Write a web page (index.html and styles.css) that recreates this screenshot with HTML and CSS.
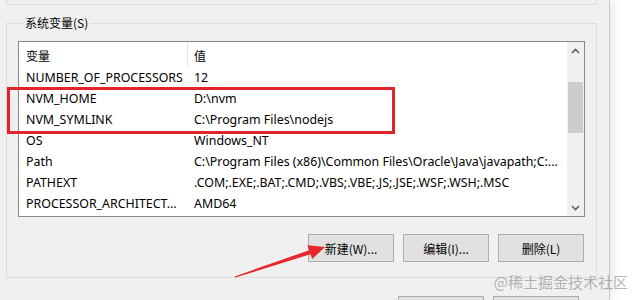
FILE: index.html
```html
<!DOCTYPE html>
<html lang="zh-CN">
<head>
<meta charset="utf-8">
<title>系统变量</title>
<link rel="stylesheet" href="styles.css">
</head>
<body>
<div class="screen">
  <div class="dialog">
    <div class="prev-group"></div>
    <fieldset class="group">
      <legend class="legend">系统变量(S)</legend>
      <div class="listbox">
        <div class="list">
          <div class="row head"><span class="c1 cjk">变量</span><span class="c2 cjk">值</span></div>
          <div class="row"><span class="c1">NUMBER_OF_PROCESSORS</span><span class="c2">12</span></div>
          <div class="row"><span class="c1">NVM_HOME</span><span class="c2">D:\nvm</span></div>
          <div class="row"><span class="c1">NVM_SYMLINK</span><span class="c2">C:\Program Files\nodejs</span></div>
          <div class="row"><span class="c1">OS</span><span class="c2">Windows_NT</span></div>
          <div class="row"><span class="c1">Path</span><span class="c2">C:\Program Files (x86)\Common Files\Oracle\Java\javapath;C:...</span></div>
          <div class="row"><span class="c1">PATHEXT</span><span class="c2">.COM;.EXE;.BAT;.CMD;.VBS;.VBE;.JS;.JSE;.WSF;.WSH;.MSC</span></div>
          <div class="row"><span class="c1">PROCESSOR_ARCHITECT...</span><span class="c2">AMD64</span></div>
        </div>
        <div class="scrollbar">
          <div class="sb-btn"><svg width="9" height="6" viewBox="0 0 9 6"><path d="M1 5 L4.5 1.5 L8 5" fill="none" stroke="#606060" stroke-width="1.6"/></svg></div>
          <div class="sb-track"><div class="sb-thumb"></div></div>
          <div class="sb-btn"><svg width="9" height="6" viewBox="0 0 9 6"><path d="M1 1 L4.5 4.5 L8 1" fill="none" stroke="#606060" stroke-width="1.6"/></svg></div>
        </div>
      </div>
      <div class="buttons">
        <button class="btn">新建(W)...</button>
        <button class="btn">编辑(I)...</button>
        <button class="btn">删除(L)</button>
      </div>
    </fieldset>
    <div class="dlg-buttons">
      <button class="btn" aria-label="确定"></button>
      <button class="btn" aria-label="取消"></button>
    </div>
  </div>
  <div class="highlight"></div>
  <svg class="arrow" width="640" height="300" viewBox="0 0 640 300">
    <polygon points="235.3,277.6 310.4,254.2 312.2,259 325,247 307.4,245.3 309.2,250.2 234.7,276.4" fill="#e8262d"/>
  </svg>
  <div class="watermark">@稀土掘金技术社区</div>
</div>
</body>
</html>
```

FILE: styles.css
```css
* { box-sizing: border-box; }
body {
  margin: 0;
  background: #ffffff;
  font-family: "Noto Sans", "Noto Sans CJK SC", sans-serif;
  font-size: 12px;
  color: #000;
}
.cjk, .legend, .btn, .watermark {
  font-family: "Noto Sans CJK SC", "Noto Sans", sans-serif;
}
.screen {
  position: relative;
  width: 640px;
  height: 300px;
  overflow: hidden;
}
.dialog {
  width: 610px;
  height: 300px;
  background: #f0f0f0;
  border-right: 1px solid #c8c8c8;
  box-shadow: 3px 0 10px rgba(0, 0, 0, 0.10);
  padding: 0 12px 0 6px;
  overflow: hidden;
}
.prev-group {
  height: 5px;
  border: 1px solid #dcdcdc;
  border-top: 0;
}
.group {
  margin: 10px 0 0;
  padding: 0 11px 15px;
  border: 1px solid #dcdcdc;
  min-width: 0;
}
.legend {
  padding: 0 2px;
  margin-left: 5px;
  line-height: 16px;
  font-size: 12px;
}
.listbox {
  margin-top: 10px;
  height: 176px;
  border: 1px solid #8a8a8a;
  background: #fff;
  display: flex;
}
.list { flex: 1; min-width: 0; font-size: 12.4px; }
.row {
  display: grid;
  grid-template-columns: 169px 1fr;
  height: 21px;
  align-items: center;
  white-space: nowrap;
}
.row.head { height: 25px; align-items: stretch; font-size: 12px; }
.row.head .c1 { border-right: 1px solid #e5e5e5; }
.row.head span { display: flex; align-items: center; padding-top: 1px; }
.c1 { padding-left: 7px; overflow: hidden; }
.c2 { padding-left: 6px; overflow: hidden; }
.scrollbar {
  width: 17px;
  background: #f0f0f0;
  display: flex;
  flex-direction: column;
}
.sb-btn {
  height: 17px;
  display: flex;
  align-items: center;
  justify-content: center;
}
.sb-track { flex: 1; padding-top: 23px; }
.sb-thumb {
  height: 51px;
  margin: 0 1px;
  background: #cdcdcd;
}
.buttons {
  display: flex;
  justify-content: flex-end;
  gap: 9px;
  margin-top: 17px;
  margin-right: 1px;
}
.btn {
  width: 86px;
  height: 28px;
  border: 1px solid #adadad;
  background: #e1e1e1;
  font-size: 12px;
  color: #000;
  padding: 0;
}
.dlg-buttons {
  display: flex;
  justify-content: flex-end;
  gap: 9px;
  margin-top: 18px;
  margin-right: 18px;
}
.highlight {
  position: absolute;
  left: 7px;
  top: 87px;
  width: 388px;
  height: 47px;
  border: 3px solid #e3242b;
}
.arrow { position: absolute; left: 0; top: 0; }
.watermark {
  position: absolute;
  right: 12px;
  top: 272px;
  font-size: 15px;
  line-height: 20px;
  color: rgba(120, 120, 120, 0.55);
}
```
